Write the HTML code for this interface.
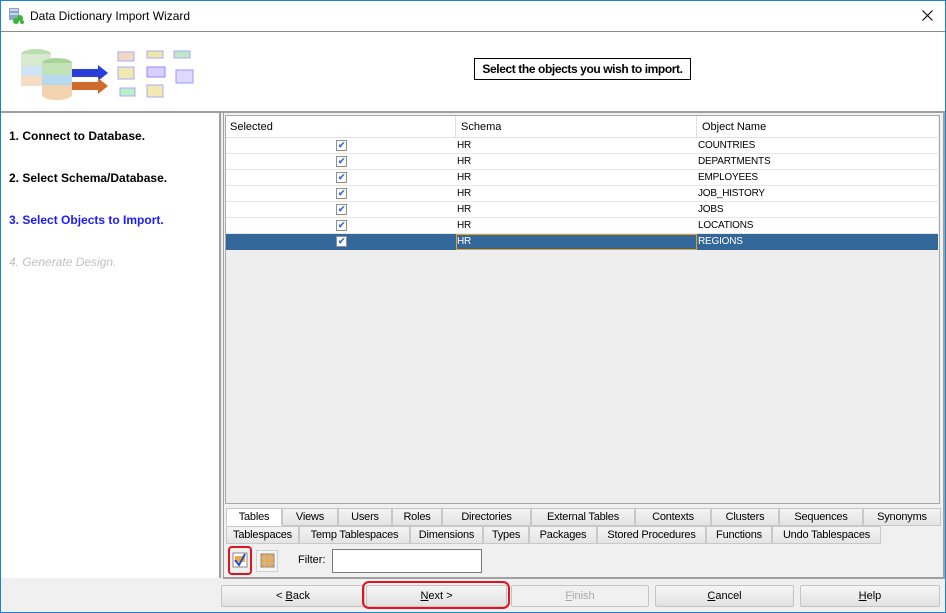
<!DOCTYPE html>
<html><head><meta charset="utf-8"><style>
*{box-sizing:border-box;margin:0;padding:0}
body{width:946px;height:613px;overflow:hidden;background:#f0f0f0;font-family:"Liberation Sans",sans-serif;font-size:11px;position:relative}
.abs{position:absolute}
.win{left:0;top:0;width:946px;height:613px;border:1px solid #1883d7;background:#f0f0f0}
.tab{position:absolute;height:18px;border:1px solid #c8c8c8;background:linear-gradient(#f4f4f4,#e4e4e4);text-align:center;line-height:16px;font-size:11px;color:#000;white-space:nowrap;letter-spacing:-0.2px}
.btn{position:absolute;top:585px;height:22px;border:1px solid #c4c4c4;border-radius:2px;background:linear-gradient(#f6f6f6,#e2e2e2);text-align:center;line-height:20px;font-size:11px}
.row{position:absolute;left:226px;width:712px;height:16px;border-bottom:1px solid #e6e6e6;background:#fff;font-size:10px;line-height:15px;letter-spacing:-0.2px}
.row span{position:absolute}
.cb{position:absolute;left:110px;top:2px;width:11px;height:11px;border:1px solid #8e8e8e;background:#fff;color:#3a6fc4;font-size:9px;line-height:9px;text-align:center;font-weight:bold}
</style></head><body>
<div class="abs win"></div>
<div class="abs" style="left:1px;top:1px;width:944px;height:31px;background:#fff"></div>
<svg class="abs" style="left:9px;top:8px" width="16" height="16"><rect x="0" y="0" width="10" height="12" fill="#8aa6c8"/><rect x="1" y="1" width="8" height="2" fill="#c9d7ea"/><rect x="1" y="5" width="8" height="2" fill="#c9d7ea"/><circle cx="11" cy="10" r="3" fill="#3cb43c"/><circle cx="7" cy="13" r="3" fill="#3cb43c"/><circle cx="13" cy="14" r="2" fill="#3cb43c"/></svg>
<div class="abs" style="left:30px;top:9px;font-size:12px;color:#000">Data Dictionary Import Wizard</div>
<svg class="abs" style="left:922px;top:10px" width="11" height="11"><path d="M0.5 0.5L10.5 10.5M10.5 0.5L0.5 10.5" stroke="#000" stroke-width="1.1"/></svg>
<div class="abs" style="left:1px;top:31px;width:944px;height:82px;background:#fff;border-top:1px solid #8c8c8c;border-bottom:2px solid #a0a0a0"></div>
<svg class="abs" style="left:14px;top:46px" width="200" height="58">
<ellipse cx="22" cy="8" rx="15" ry="5" fill="#b9deb0"/><rect x="7" y="8" width="30" height="30" fill="#d7ead0"/><rect x="7" y="20" width="30" height="10" fill="#cfe4f2"/><rect x="7" y="30" width="30" height="10" fill="#f5dcc4"/>
<ellipse cx="43" cy="17" rx="15" ry="5" fill="#a8d49c"/><rect x="28" y="17" width="30" height="30" fill="#c3e2b6"/><rect x="28" y="29" width="30" height="10" fill="#b8daf0"/><rect x="28" y="39" width="30" height="10" fill="#f3d2b0"/><ellipse cx="43" cy="49" rx="15" ry="5" fill="#f3d2b0"/>
<polygon points="58,23 84,23 84,19 94,27 84,35 84,31 58,31" fill="#2b3fd8"/>
<polygon points="58,36 84,36 84,32 94,40 84,48 84,44 58,44" fill="#d06a2c"/>
<rect x="104" y="6" width="16" height="9" fill="#f3d8c0" stroke="#aaf"/><rect x="133" y="5" width="16" height="7" fill="#eee7a8" stroke="#aaf"/><rect x="160" y="5" width="16" height="7" fill="#bfe8c8" stroke="#aaf"/>
<rect x="104" y="21" width="16" height="12" fill="#f0eab0" stroke="#aaf"/><rect x="133" y="21" width="18" height="10" fill="#d8d0ff" stroke="#88f"/><rect x="162" y="24" width="17" height="13" fill="#e0d8ff" stroke="#99f"/>
<rect x="106" y="42" width="15" height="8" fill="#b8f0c8" stroke="#aaf"/><rect x="133" y="39" width="16" height="12" fill="#f2e8b0" stroke="#aaf"/>
</svg>
<div class="abs" style="left:474px;top:58px;width:217px;height:22px;border:1px solid #000;background:#fff;font-weight:bold;font-size:12px;line-height:20px;text-align:center;white-space:nowrap;letter-spacing:-0.4px">Select the objects you wish to import.</div>
<div class="abs" style="left:1px;top:113px;width:220px;height:465px;background:#fff;border-right:2px solid #a0a0a0"></div>
<div class="abs" style="left:9px;top:129px;font-size:12px;font-weight:bold">1. Connect to Database.</div>
<div class="abs" style="left:9px;top:171px;font-size:12px;font-weight:bold">2. Select Schema/Database.</div>
<div class="abs" style="left:9px;top:213px;font-size:12px;font-weight:bold;color:#1a1aff">3. Select Objects to Import.</div>
<div class="abs" style="left:9px;top:255px;font-size:12px;font-style:italic;color:#c0c0c0">4. Generate Design.</div>
<div class="abs" style="left:223px;top:113px;width:722px;height:466px;border-left:1px solid #a0a0a0;border-right:2px solid #a0a0a0;border-bottom:2px solid #a0a0a0;background:#f0f0f0"></div>
<div class="abs" style="left:225px;top:115px;width:715px;height:389px;border:1px solid #a8a8a8;background:#eeeeee"></div>
<div class="abs" style="left:226px;top:116px;width:712px;height:22px;background:#fff;border-bottom:1px solid #e0e0e0;font-size:11px;line-height:22px">
<span class="abs" style="left:4px">Selected</span>
<span class="abs" style="left:229px;top:0;height:22px;border-left:1px solid #e0e0e0"></span><span class="abs" style="left:235px">Schema</span>
<span class="abs" style="left:470px;top:0;height:22px;border-left:1px solid #e0e0e0"></span><span class="abs" style="left:476px">Object Name</span>
</div>
<div class="row" style="top:138px"><div class="cb">✔</div><span style="left:231px">HR</span><span style="left:472px">COUNTRIES</span></div>
<div class="row" style="top:154px"><div class="cb">✔</div><span style="left:231px">HR</span><span style="left:472px">DEPARTMENTS</span></div>
<div class="row" style="top:170px"><div class="cb">✔</div><span style="left:231px">HR</span><span style="left:472px">EMPLOYEES</span></div>
<div class="row" style="top:186px"><div class="cb">✔</div><span style="left:231px">HR</span><span style="left:472px">JOB_HISTORY</span></div>
<div class="row" style="top:202px"><div class="cb">✔</div><span style="left:231px">HR</span><span style="left:472px">JOBS</span></div>
<div class="row" style="top:218px"><div class="cb">✔</div><span style="left:231px">HR</span><span style="left:472px">LOCATIONS</span></div>
<div class="row" style="top:234px;background:#336699;color:#fff;border-bottom:none"><div class="cb">✔</div><span style="left:230px;top:0;width:241px;height:16px;border:1px solid #e8a020"></span><span style="left:231px">HR</span><span style="left:472px">REGIONS</span></div>
<div class="tab" style="left:226px;top:508px;width:56px;background:#fff;border-bottom-color:#fff">Tables</div>
<div class="tab" style="left:282px;top:508px;width:56px">Views</div>
<div class="tab" style="left:338px;top:508px;width:54px">Users</div>
<div class="tab" style="left:392px;top:508px;width:50px">Roles</div>
<div class="tab" style="left:442px;top:508px;width:89px">Directories</div>
<div class="tab" style="left:531px;top:508px;width:104px">External Tables</div>
<div class="tab" style="left:635px;top:508px;width:76px">Contexts</div>
<div class="tab" style="left:711px;top:508px;width:68px">Clusters</div>
<div class="tab" style="left:779px;top:508px;width:84px">Sequences</div>
<div class="tab" style="left:863px;top:508px;width:78px">Synonyms</div>
<div class="tab" style="left:226px;top:526px;width:73px">Tablespaces</div>
<div class="tab" style="left:299px;top:526px;width:111px">Temp Tablespaces</div>
<div class="tab" style="left:410px;top:526px;width:73px">Dimensions</div>
<div class="tab" style="left:483px;top:526px;width:46px">Types</div>
<div class="tab" style="left:529px;top:526px;width:68px">Packages</div>
<div class="tab" style="left:597px;top:526px;width:109px">Stored Procedures</div>
<div class="tab" style="left:706px;top:526px;width:66px">Functions</div>
<div class="tab" style="left:772px;top:526px;width:109px">Undo Tablespaces</div>
<div class="abs" style="left:228px;top:546px;width:24px;height:29px;border:2px solid #e0141e;border-radius:4px"></div>
<svg class="abs" style="left:232px;top:552px" width="16" height="16"><rect x="1" y="1" width="14" height="14" fill="#fff" stroke="#888"/><rect x="3" y="4" width="10" height="6" fill="#f2a840"/><path d="M3 8 L7 13 L13 2" stroke="#2050d0" stroke-width="2" fill="none"/></svg>
<div class="abs" style="left:256px;top:550px;width:22px;height:22px;border:1px solid #d0d0d0;background:#f4f4f4"></div>
<svg class="abs" style="left:260px;top:553px" width="15" height="15"><rect x="1" y="1" width="13" height="13" fill="#f2a840" stroke="#888"/><path d="M1 5H14M1 10H14M5 1V14M10 1V14" stroke="#bbb"/></svg>
<div class="abs" style="left:298px;top:554px;font-size:11px">Filter:</div>
<div class="abs" style="left:332px;top:549px;width:150px;height:24px;border:1px solid #7a7a7a;background:#fff"></div>
<div class="btn" style="left:221px;width:144px">&lt; <u>B</u>ack</div>
<div class="btn" style="left:366px;width:141px"><u>N</u>ext &gt;</div>
<div class="abs" style="left:362px;top:581px;width:148px;height:28px;border:2px solid #e0141e;border-radius:7px"></div>
<div class="btn" style="left:511px;width:138px;color:#a8a8a8;background:#f0f0f0"><u>F</u>inish</div>
<div class="btn" style="left:655px;width:139px"><u>C</u>ancel</div>
<div class="btn" style="left:800px;width:140px"><u>H</u>elp</div>
</body></html>
